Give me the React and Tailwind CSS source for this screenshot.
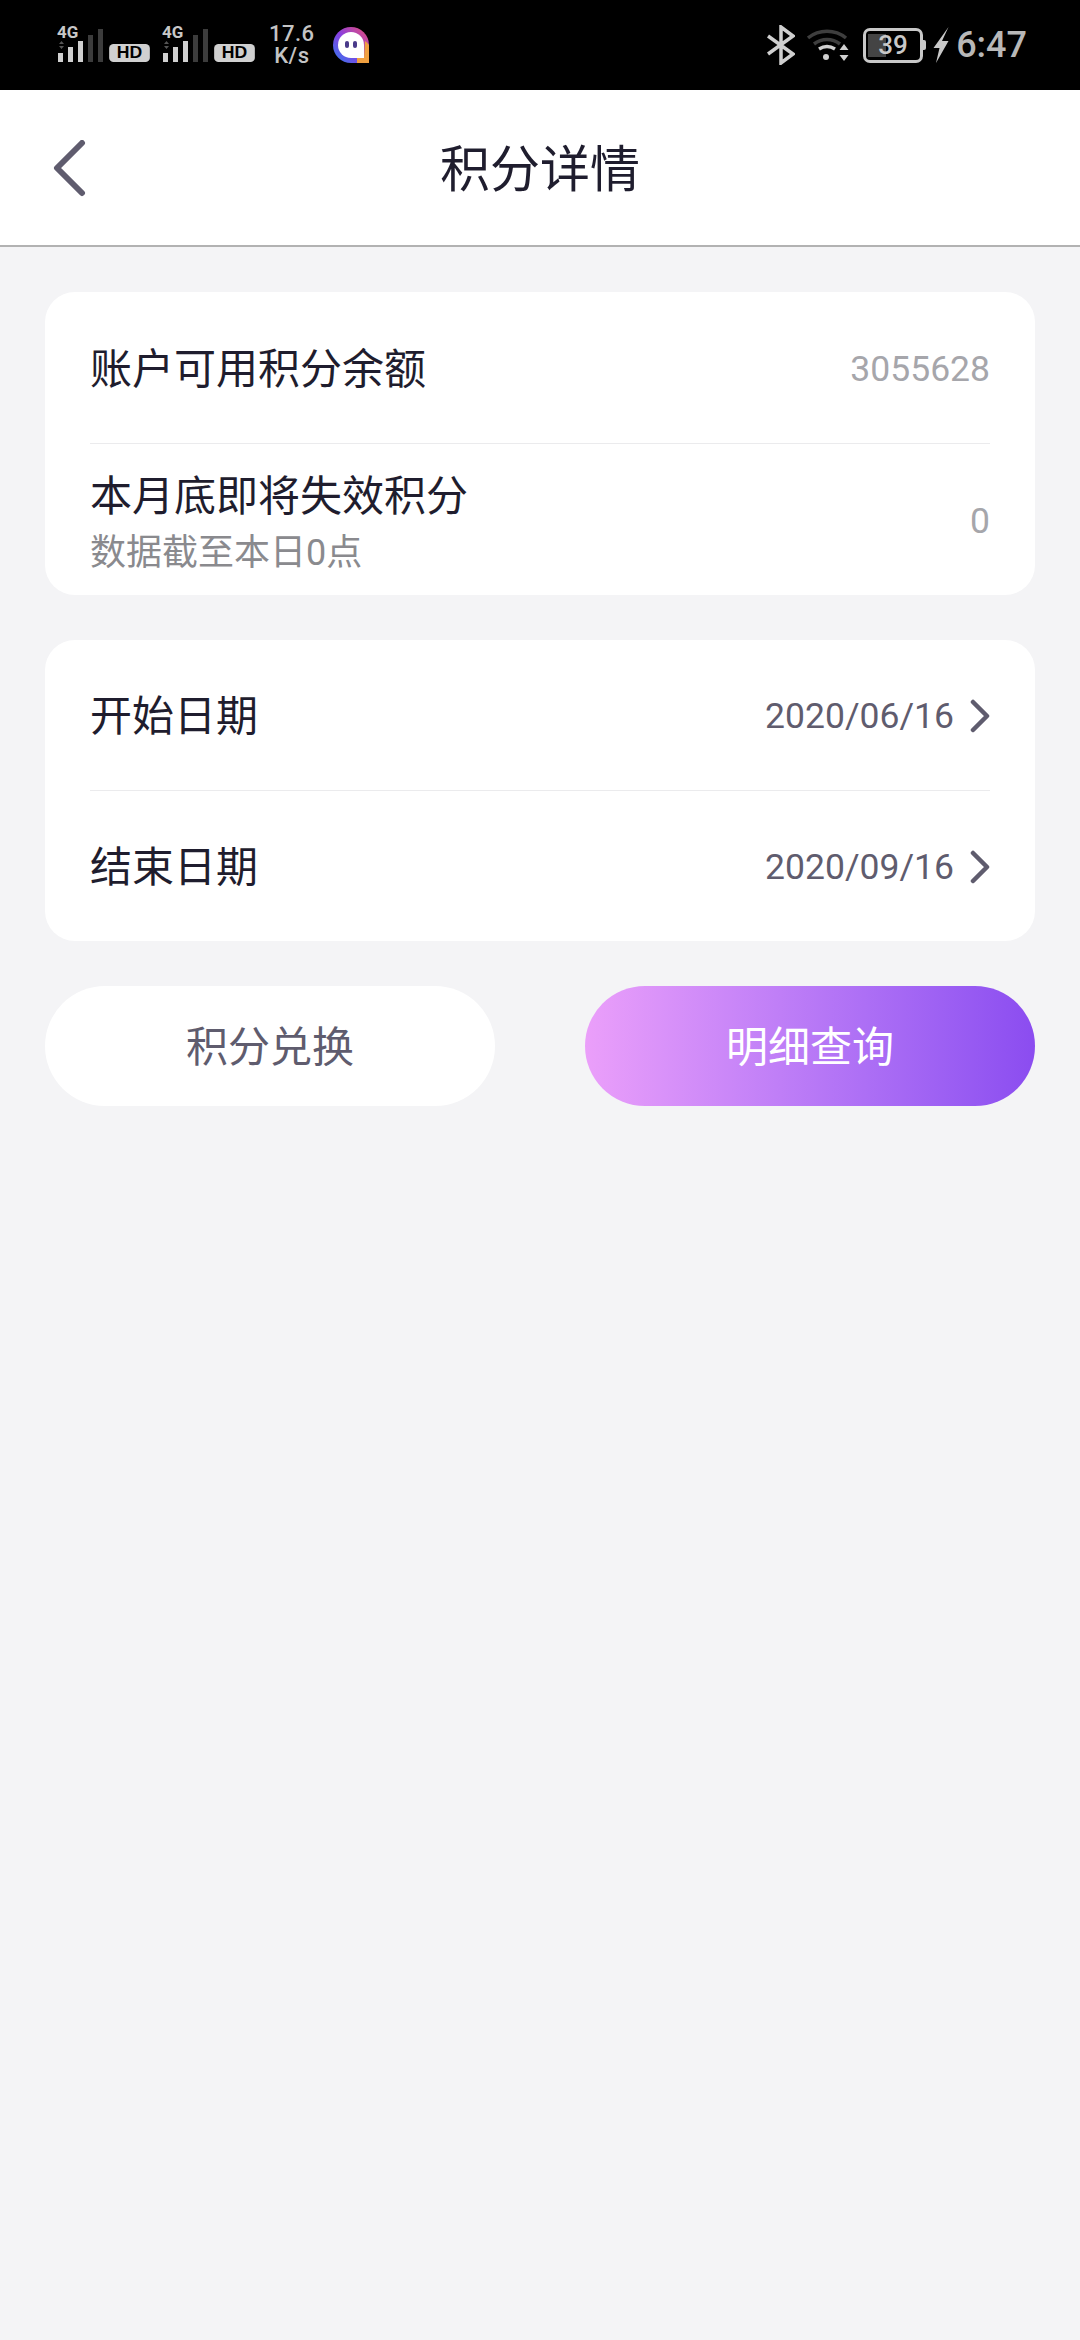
const font = 'font-["Roboto","Noto_Sans_CJK_SC",sans-serif]';

function Signal() {
  return (
    <div className="relative w-[45px] h-[36px]">
      <span className="absolute left-[-1px] top-[-3px] text-[17px] leading-[17px] font-bold text-[#c8c8c8]">4G</span>
      <svg width="45" height="36" viewBox="0 0 45 36" className="absolute left-0 top-0">
        <path d="M1 17l2.500-3 2.500 3zM1 19l2.500 3 2.500-3z" fill="#555" />
        <rect x="0" y="26" width="5" height="9" fill="#d0d0d0" />
        <rect x="10" y="20" width="5" height="15" fill="#d0d0d0" />
        <rect x="20" y="14" width="5" height="21" fill="#d0d0d0" />
        <rect x="30" y="8" width="5" height="27" fill="#3c3c3c" />
        <rect x="40" y="2" width="5" height="33" fill="#3c3c3c" />
      </svg>
    </div>
  );
}

function Hd() {
  return (
    <div className="w-[37px] h-[18px] rounded-[4px] bg-[#d0d0d0] flex items-center justify-center text-[16px] leading-none font-black text-black font-['Liberation_Sans'] scale-x-110">
      HD
    </div>
  );
}

function StatusBar() {
  return (
    <div className="h-[90px] bg-black flex items-center justify-between pl-[58px] pr-[53px] font-['Roboto']">
      <div className="flex items-center">
        <div className="flex items-end">
          <Signal />
          <div className="ml-[8px] mb-[1px]"><Hd /></div>
        </div>
        <div className="flex items-end ml-[15px]">
          <Signal />
          <div className="ml-[8px] mb-[1px]"><Hd /></div>
        </div>
        <div className="ml-[16px] flex flex-col items-center text-[#c4c4c4] font-medium text-[22px] leading-[22px] tracking-[0.5px]">
          <span>17.6</span>
          <span>K/s</span>
        </div>
        <svg width="36" height="36" viewBox="0 0 36 36" className="ml-[18px]">
          <defs>
            <linearGradient id="ring" x1="0" y1="1" x2="1" y2="0">
              <stop offset="0" stopColor="#2f7bf0" />
              <stop offset="0.5" stopColor="#8a3fe0" />
              <stop offset="1" stopColor="#ee4f70" />
            </linearGradient>
          </defs>
          <path d="M18 0a18 18 0 0 1 18 18v18H18A18 18 0 0 1 18 0z" fill="url(#ring)" />
          <path d="M32 14a18 18 0 0 1 4 4v18H24v-5h7z" fill="#f0a040" />
          <path d="M18 5a13 13 0 0 1 13 13v13H18A13 13 0 0 1 18 5z" fill="#fff" />
          <rect x="12" y="14" width="4" height="7" rx="2" fill="#4a3a8a" />
          <rect x="20" y="14" width="4" height="7" rx="2" fill="#4a3a8a" />
        </svg>
      </div>
      <div className="flex items-center">
        <svg width="28" height="40" viewBox="0 0 28 40" fill="none" stroke="#cfcfcf" strokeWidth="3.500">
          <path d="M1 11l25 18-12 9V2l12 9L1 29" />
        </svg>
        <svg width="42" height="34" viewBox="0 0 42 34" fill="none" className="ml-[12px]">
          <path d="M1 10c11-9 27-9 38 0" stroke="#3e3e3e" strokeWidth="3.500" />
          <path d="M7 16c8-6 18-6 26 0" stroke="#3e3e3e" strokeWidth="3.500" />
          <path d="M12 21c5-3 11-3 16 0" stroke="#d0d0d0" strokeWidth="3.500" />
          <circle cx="19" cy="29" r="3" fill="#d0d0d0" />
          <path d="M37 16l4.500 6h-9zM37 33l4.500-6h-9z" fill="#d0d0d0" />
        </svg>
        <div className="relative ml-[14px] w-[60px] h-[35px] rounded-[7px] border-[3px] border-[#c8c8c8] overflow-hidden">
          <div className="absolute left-[2px] top-[3px] bottom-[3px] w-[18px] bg-[#444]" />
          <div className="absolute inset-0 flex items-center justify-center text-[26px] font-medium text-[#c8c8c8] leading-none">39</div>
        </div>
        <div className="w-[3px] h-[10px] bg-[#c8c8c8] rounded-r-[2px]" />
        <svg width="16" height="36" viewBox="0 0 16 36" className="ml-[7px]">
          <path d="M15.500 0L0.500 21h6L3 36l12.500-22H9z" fill="#c8c8c8" />
        </svg>
        <span className="ml-[7px] text-[36px] leading-none font-medium text-[#b8b8b8]">6:47</span>
      </div>
    </div>
  );
}

function Chevron() {
  return (
    <svg width="20" height="34" viewBox="0 0 20 34" fill="none" stroke="#5f5c6e" strokeWidth="4.500" strokeLinecap="round" strokeLinejoin="round" className="ml-[16px] mt-[-2px]">
      <path d="M3 3l14 14L3 31" />
    </svg>
  );
}

function Row({ label, sub, value, valueClass, arrow, divider }) {
  return (
    <div className={`flex-1 flex items-center justify-between pt-[4px] ${divider ? 'border-b border-[#ebebed]' : ''}`}>
      <div className={`flex flex-col ${sub ? 'pt-[4px]' : ''}`}>
        <span className="text-[42px] leading-[54px] text-[#1f1d2e]">{label}</span>
        {sub && <span className="mt-[4px] text-[36px] leading-[50px] text-[#8a8a8e]">{sub}</span>}
      </div>
      <div className="flex items-center">
        <span className={`text-[35.500px] leading-none ${valueClass}`}>{value}</span>
        {arrow && <Chevron />}
      </div>
    </div>
  );
}

export default function App() {
  return (
    <div className={`${font} w-[1080px] h-[2340px] bg-[#f4f4f6] flex flex-col`}>
      <StatusBar />

      {/* Nav bar */}
      <div className="relative h-[157px] bg-white border-b-2 border-[#b2b2b2] flex items-center justify-center">
        <svg width="34" height="58" viewBox="0 0 34 58" fill="none" stroke="#5f5c6e" strokeWidth="6" strokeLinecap="round" strokeLinejoin="round" className="absolute left-[52px] top-[50px]">
          <path d="M30 3L5 28l25 25" />
        </svg>
        <span className="text-[50px] leading-none pt-[4px] text-[#1f1d2e]">积分详情</span>
      </div>

      <div className="flex flex-col px-[45px] pt-[45px]">
        <div className="h-[303px] bg-white rounded-[30px] px-[45px] flex flex-col">
          <Row label="账户可用积分余额" value="3055628" valueClass="text-[#a6a6ab]" divider />
          <Row label="本月底即将失效积分" sub="数据截至本日0点" value="0" valueClass="text-[#a6a6ab]" />
        </div>

        <div className="mt-[45px] h-[301px] bg-white rounded-[30px] px-[45px] flex flex-col">
          <Row label="开始日期" value="2020/06/16" valueClass="text-[#5f5c6e]" arrow divider />
          <Row label="结束日期" value="2020/09/16" valueClass="text-[#5f5c6e]" arrow />
        </div>

        <div className="mt-[45px] flex justify-between">
          <button className="w-[450px] h-[120px] rounded-[60px] bg-white pt-[3px] text-[42px] text-[#5f5c6e]">积分兑换</button>
          <button className="w-[450px] h-[120px] rounded-[60px] bg-gradient-to-r from-[#eb9ffa] to-[#8b4cf0] pt-[3px] text-[42px] text-white">明细查询</button>
        </div>
      </div>
    </div>
  );
}
